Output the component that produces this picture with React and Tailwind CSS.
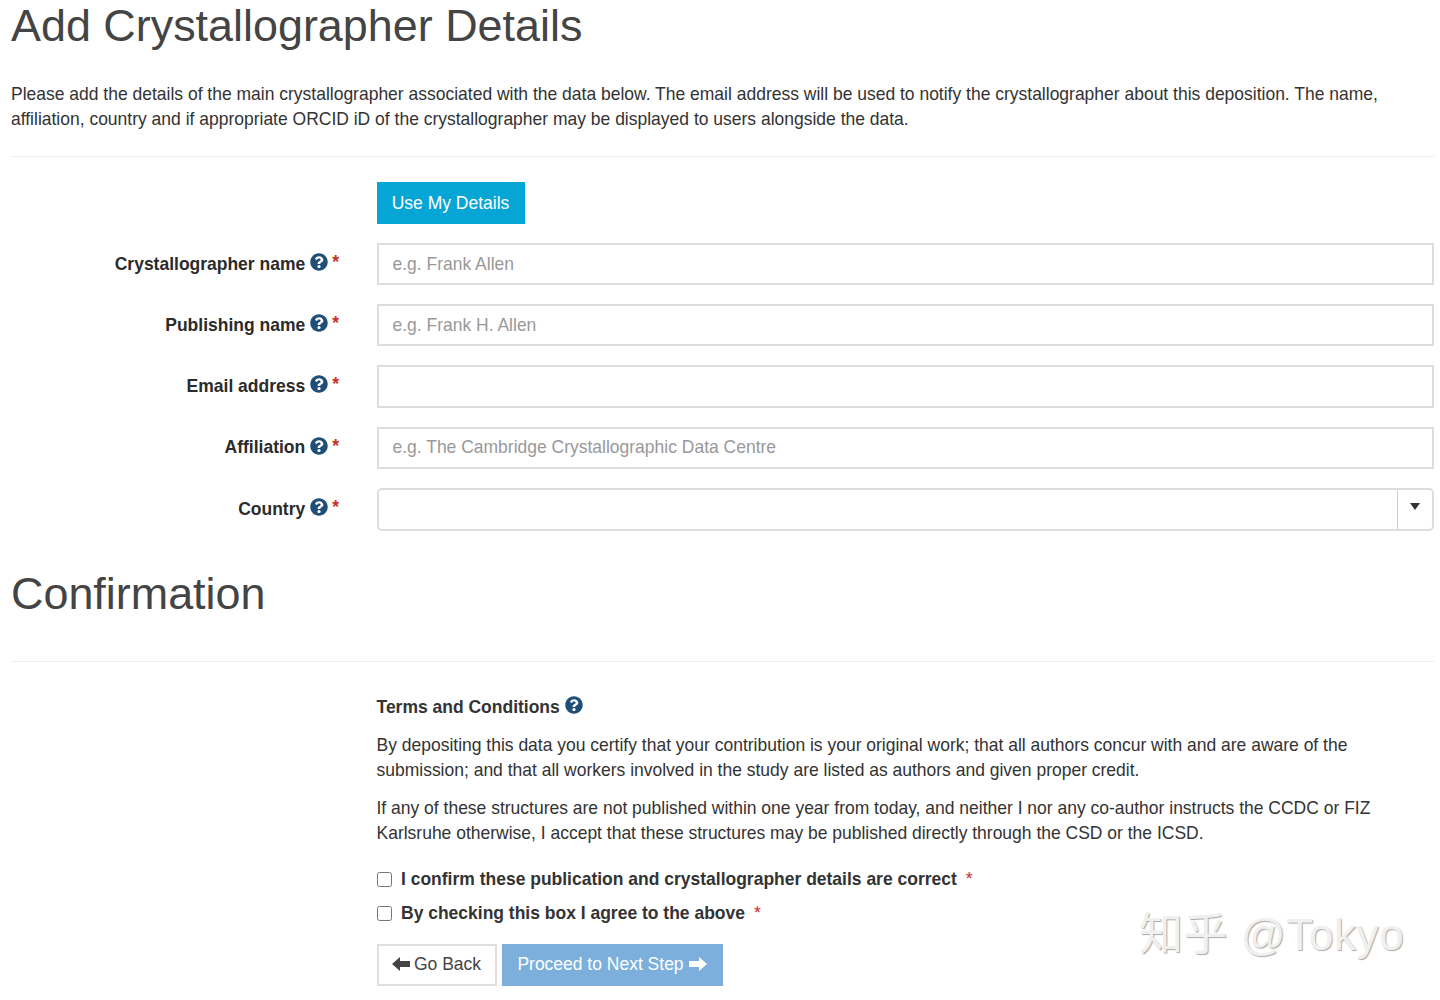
import { FaQuestionCircle } from 'react-icons/fa';

const fields = [
    { label: 'Crystallographer name', placeholder: 'e.g. Frank Allen' },
    { label: 'Publishing name', placeholder: 'e.g. Frank H. Allen' },
    { label: 'Email address', placeholder: '' },
    { label: 'Affiliation', placeholder: 'e.g. The Cambridge Crystallographic Data Centre' },
];

function FieldLabel({ label }) {
    return (
        <label className="w-[328px] flex justify-end items-center font-bold text-[#2b2b2b]">
            <span>{label}</span>
            <FaQuestionCircle className="ml-[5px] mb-[4px] text-[18px] text-[#1f4e79]" />
            <span className="ml-[4px] mb-[3px] text-[#c9302c]">*</span>
        </label>
    );
}

function Agreement({ text }) {
    return (
        <label className="flex items-center h-[34px] font-bold text-[#333333]">
            <input type="checkbox" className="w-[15px] h-[15px] ml-[365.5px] mr-[9.5px]" />
            <span>{text}</span>
            <span className="ml-[9px] font-normal text-[#c9302c]">*</span>
        </label>
    );
}

function BlockArrow({ flip }) {
    return (
        <svg width="18" height="14" viewBox="0 0 18 14" className={flip ? 'mb-[2px] -scale-x-100' : 'mb-[2px]'}>
            <path d="M0 7 8 0v4h10v6H8v4z" fill="currentColor" />
        </svg>
    );
}

export default function App() {
    return (
        <div className="relative h-[1000px] overflow-hidden bg-white pl-[11px] pr-[6px] text-[17.49px] leading-[25px] text-[#333333] font-['Liberation_Sans',Arial,sans-serif]">
            <h1 className="pt-[1px] text-[44.9px] leading-[50px] text-[#444444]">Add Crystallographer Details</h1>

            <p className="mt-[31px]">
                Please add the details of the main crystallographer associated with the data below. The email address will be used to notify the crystallographer about this deposition. The name, affiliation, country and if appropriate ORCID iD of the crystallographer may be displayed to users alongside the data.
            </p>

            <hr className="mt-[24px] border-[#eeeeee]" />

            <div className="mt-[25px] ml-[365.5px]">
                <button className="h-[42px] w-[148px] bg-[#05a5d6] text-white">Use My Details</button>
            </div>

            {fields.map((field) => (
                <div key={field.label} className="flex mt-[19px] h-[42.2px]">
                    <FieldLabel label={field.label} />
                    <input
                        placeholder={field.placeholder}
                        className="ml-[37.5px] flex-1 border-2 border-[#dddddd] px-[14px] placeholder:text-[#999999]"
                    />
                </div>
            ))}

            <div className="flex mt-[19px] h-[43px]">
                <FieldLabel label="Country" />
                <div className="ml-[37.5px] flex-1 flex justify-end border-2 border-[#dddddd] rounded-[5px]">
                    <div className="w-[35px] flex items-center justify-center border-l border-[#cccccc]">
                        <svg width="10" height="7" viewBox="0 0 10 7" className="mb-[5px]">
                            <path d="M0 0h10L5 7z" fill="#333333" />
                        </svg>
                    </div>
                </div>
            </div>

            <h2 className="mt-[38px] text-[44.9px] leading-[50px] text-[#444444]">Confirmation</h2>

            <hr className="mt-[42px] border-[#eeeeee]" />

            <div className="ml-[365.5px] mt-[33px]">
                <div className="flex items-center font-bold text-[#333333]">
                    <span>Terms and Conditions</span>
                    <FaQuestionCircle className="ml-[5px] mb-[4px] text-[18px] text-[#1f4e79]" />
                </div>
                <p className="mt-[13px]">
                    By depositing this data you certify that your contribution is your original work; that all authors concur with and are aware of the submission; and that all workers involved in the study are listed as authors and given proper credit.
                </p>
                <p className="mt-[13px]">
                    If any of these structures are not published within one year from today, and neither I nor any co-author instructs the CCDC or FIZ Karlsruhe otherwise, I accept that these structures may be published directly through the CSD or the ICSD.
                </p>
            </div>

            <div className="mt-[17px]">
                <Agreement text="I confirm these publication and crystallographer details are correct" />
                <Agreement text="By checking this box I agree to the above" />
            </div>

            <div className="ml-[365.5px] mt-[13px] flex gap-[5px]">
                <button className="h-[42px] w-[120px] flex items-center justify-center gap-[4px] border-2 border-[#e0e0e0] text-[#444444]">
                    <BlockArrow />
                    Go Back
                </button>
                <button className="h-[42px] w-[221px] flex items-center justify-center gap-[5px] bg-[#7cafdb] text-white">
                    Proceed to Next Step
                    <BlockArrow flip />
                </button>
            </div>

            <div className="absolute left-[1139px] top-[907px] text-[44px] leading-[56px] tracking-[0.6px] text-[#f0f0f0] [text-shadow:1px_1px_1px_#a8a8a8] font-['Liberation_Sans','Noto_Sans_CJK_SC',sans-serif]">
                知乎 @Tokyo
            </div>
        </div>
    );
}
